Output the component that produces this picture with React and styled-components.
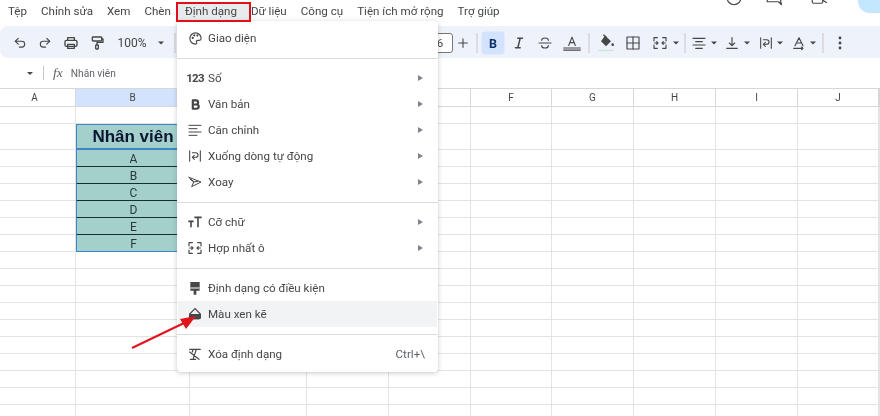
import React from "react";
import styled, { createGlobalStyle } from "styled-components";

const Global = createGlobalStyle`
  html, body { margin: 0; padding: 0; background: #fff; }
  body { font-family: Roboto, "Liberation Sans", sans-serif; overflow: hidden; }
`;

const Page = styled.div`
  position: relative;
  width: 880px;
  height: 416px;
  overflow: hidden;
  background: #fff;
  color: #444746;
  filter: blur(0.5px);
`;

const MenuBar = styled.div`
  height: 26px;
  display: flex;
  justify-content: space-between;
  padding-left: 8px;
`;
const MenuList = styled.div`
  display: flex;
  gap: 14px;
  align-items: center;
  height: 21px;
  font-size: 11.6px;
`;
const MenuLabel = styled.span`
  color: #444746;
`;
const TopIcons = styled.div`
  display: flex;
  align-items: flex-start;
  margin-top: -11px;
  margin-right: -18px;
  height: 24px;
`;
const TopIcon = styled.span`
  display: flex;
  margin-left: ${(p) => p.$gap}px;
`;
const Avatar = styled.div`
  width: 40px;
  height: 24px;
  margin-left: 30px;
  border-radius: 12px;
  background: #c2e7ff;
`;

const ToolBar = styled.div`
  height: 32px;
  background: #eef2fa;
  border-radius: 8px 0 0 8px;
  position: relative;
`;
const ToolSlot = styled.div`
  position: absolute;
  left: ${(p) => p.$x}px;
  top: calc(50% + 1px);
  transform: translate(-50%, -50%);
  display: flex;
  align-items: center;
  justify-content: center;
`;
const Active = styled.div`
  width: 23px;
  height: 23px;
  border-radius: 4px;
  background: #d3e3fd;
  display: flex;
  align-items: center;
  justify-content: center;
  font: 700 12.5px Roboto, sans-serif;
  color: #0b2f6b;
`;
const Zoom = styled.span`
  font-size: 12px;
  color: #444746;
`;
const Sep = styled.div`
  width: 1px;
  height: 20px;
  background: #c7c7c7;
`;
const Caret = styled.div`
  width: 0;
  height: 0;
  border-left: 3px solid transparent;
  border-right: 3px solid transparent;
  border-top: 3.5px solid #444746;
`;
const FontBox = styled.div`
  width: 24px;
  height: 18px;
  border: 1px solid #747775;
  border-radius: 3px;
  font-size: 11px;
  display: flex;
  align-items: center;
  justify-content: center;
  background: #fff;
`;

const FormulaBar = styled.div`
  height: 30px;
  display: flex;
  align-items: center;
  padding-left: 27px;
  font-size: 10.2px;
  color: #5f6368;
`;
const FxSep = styled.div`
  width: 1px;
  height: 14px;
  background: #c7c7c7;
  margin: 0 9px 0 10px;
`;
const FxMark = styled.i`
  font: italic 13.5px "Liberation Serif", serif;
  margin-right: 8px;
  color: #5f6368;
`;

const Row = styled.div`
  display: grid;
  grid-template-columns: 76px 114px 117px 82px 82px 81px 82px 82px 82px 81px 1fr;
  height: ${(p) => p.$h}px;
`;
const HeadCell = styled.div`
  border-top: 1px solid #d5d7da;
  border-bottom: 1px solid #d5d7da;
  border-right: 1px solid #d5d7da;
  background: ${(p) => (p.$active ? "#d3e3fd" : "#fff")};
  font-size: 10px;
  color: #444746;
  display: flex;
  align-items: center;
  justify-content: center;
  padding-right: ${(p) => (p.$pad ? "6px" : 0)};
`;
const Cell = styled.div`
  box-sizing: border-box;
  border-right: 1px solid #e3e3e3;
  border-bottom: 1px solid #e3e3e3;
`;
const TealCell = styled.div`
  box-sizing: border-box;
  background: #a3d0ca;
  border-left: 1px solid #3d85c6;
  border-bottom: 1px solid ${(p) => (p.$last ? "#3d85c6" : "#17302e")};
  padding-top: 1px;
  font-size: 12px;
  color: #2b3a38;
  display: flex;
  align-items: center;
  justify-content: center;
`;
const TitleCell = styled(TealCell)`
  border: 1px solid #3d85c6;
  border-bottom-width: 2px;
  padding-top: 0;
  font: 700 17px "Liberation Sans", Arial, sans-serif;
  color: #0b1533;
`;

const Menu = styled.div`
  position: absolute;
  left: 177px;
  top: 21px;
  width: 261px;
  height: 351px;
  background: #fff;
  border-radius: 4px;
  box-shadow: 0 1px 5px rgba(60, 64, 67, 0.28);
  font-size: 11.6px;
  color: #444746;
`;
const Section = styled.div`
  padding: ${(p) => (p.$first ? "4px 0 7px" : p.$last ? "6px 0" : "6px 0 7px")};
  border-top: ${(p) => (p.$first ? "none" : "1px solid #dadce0")};
`;
const Item = styled.div`
  height: 26px;
  display: flex;
  align-items: center;
  margin: 0 1px;
  padding: 0 12px 0 9px;
  background: ${(p) => (p.$hover ? "#f1f3f4" : "transparent")};
`;
const ItemIcon = styled.span`
  width: 16px;
  height: 16px;
  margin-right: 5px;
  display: flex;
  align-items: center;
  justify-content: center;
  color: #444746;
`;
const ItemText = styled.span`
  flex: 1;
  padding-bottom: 1px;
`;
const Shortcut = styled.span`
  color: #5f6368;
  padding-bottom: 1px;
`;
const SubArrow = styled.span`
  width: 0;
  height: 0;
  margin-right: 2px;
  border-top: 3px solid transparent;
  border-bottom: 3px solid transparent;
  border-left: 5px solid #80868b;
`;

const Highlight = styled.div`
  position: absolute;
  left: 176px;
  top: 2px;
  width: 75px;
  height: 20px;
  box-sizing: border-box;
  border: 2.5px solid #e0101a;
`;
const ActiveMenu = styled.div`
  position: absolute;
  left: 178px;
  top: 4px;
  width: 71px;
  height: 16px;
  background: #e8eaed;
  z-index: -1;
`;
const ArrowSvg = styled.svg`
  position: absolute;
  left: 128px;
  top: 308px;
`;

const S = ({ children, size = 16, sw = 2 }) => (
  <svg width={size} height={size} viewBox="0 0 24 24" fill="none" stroke="currentColor" strokeWidth={sw} strokeLinecap="round" strokeLinejoin="round">
    {children}
  </svg>
);

const icons = {
  undo: <S size={14} sw={1.9}><path d="M9 4 4 9l5 5" /><path d="M4 9h11a5 5 0 0 1 0 10h-4" /></S>,
  redo: <S size={14} sw={1.9}><path d="m15 4 5 5-5 5" /><path d="M20 9H9a5 5 0 0 0 0 10h4" /></S>,
  print: <S size={16}><path d="M7 8V4h10v4" /><rect x="3" y="8" width="18" height="9" rx="2" /><rect x="7" y="14" width="10" height="6" /></S>,
  paint: <S size={16}><rect x="5" y="3" width="14" height="6" rx="1" /><path d="M19 6h2v5h-9v3" /><rect x="10" y="15" width="4" height="6" rx="1" /></S>,
  palette: <S size={15} sw={1.8}><path d="M12 3a9 9 0 1 0 0 18c1.5 0 2-1 2-2 0-1.5-1-2-.5-3 .4-.8 1.5-1 2.5-1h2c2 0 3-1.5 3-3 0-5-4-9-9-9z" /><circle cx="7.5" cy="11" r=".8" fill="currentColor" /><circle cx="10" cy="7" r=".8" fill="currentColor" /><circle cx="15" cy="7" r=".8" fill="currentColor" /></S>,
  bold: <svg width="13" height="13" viewBox="0 0 24 24" fill="none" stroke="currentColor" strokeWidth="4" strokeLinejoin="round"><path d="M7 4.5h6a3.7 3.7 0 0 1 0 7.5H7zM7 12h7a3.9 3.9 0 0 1 0 7.8H7z" /></svg>,
  align: <S size={16} sw={1.5}><path d="M3 5h18M3 10h12M3 15h18M3 20h12" /></S>,
  wrap: <S size={16} sw={1.6}><path d="M4 4v16M20 4v16M8 7h5a3.5 3.5 0 0 1 0 7H9" /><path d="m11 11-3 3 3 3" /></S>,
  rotate: <S size={16} sw={1.5}><path d="M3 5l18 7-14 7 3-7z" /><path d="M10 12 5 8M10 12l6-1" /></S>,
  size: <svg width="16" height="16" viewBox="0 0 24 24" fill="none" stroke="currentColor" strokeWidth="2.4"><path d="M11 5h11M16.5 5v15M2 11h8M6 11v9" /></svg>,
  merge: <S size={16} sw={1.7}><path d="M3 9V4h5M21 9V4h-5M3 15v5h5M21 15v5h-5" /><path d="M4 12h5M7 10l2 2-2 2M20 12h-5M17 10l-2 2 2 2" /></S>,
  cond: <svg width="16" height="16" viewBox="0 0 24 24" fill="currentColor"><path d="M5 3h14v13H5zM10 16h4v6h-4z" /><path d="M5 12h14" stroke="#fff" strokeWidth="1.5" /></svg>,
  alt: <svg width="16" height="16" viewBox="0 0 24 24" fill="none" stroke="currentColor" strokeWidth="1.8"><path d="M12 4 4 12v5a2 2 0 0 0 2 2h12a2 2 0 0 0 2-2v-5z" /><path d="M4 13h16v4a2 2 0 0 1-2 2H6a2 2 0 0 1-2-2z" fill="currentColor" /></svg>,
  clear: <S size={16} sw={1.8}><path d="M4 5h16M9 5 8 9M14 5 9 20M5 20h8M4 9l14 11" /></S>,
  fill: <svg width="20" height="20" viewBox="0 0 24 24"><path d="M11 3l7 7-6 6-6-6z" fill="#444746" /><path d="M9 2l3 3" stroke="#444746" strokeWidth="1.6" /><circle cx="20" cy="14" r="1.6" fill="#444746" /><path d="M3 21h18" stroke="#cfe3d6" strokeWidth="1.6" /></svg>,
};

const Num123 = styled.span`
  font: 700 11.5px Roboto, sans-serif;
  letter-spacing: -0.8px;
`;

const columns = ["A", "B", "", "", "", "F", "G", "H", "I", "J", ""];
const blanks = Array.from({ length: 11 });

const tools = [
  [20, icons.undo],
  [45, icons.redo],
  [71, icons.print],
  [97, icons.paint],
  [132, <Zoom>100%</Zoom>],
  [161, <Caret />],
  [175, <Sep />],
  [440, <FontBox>6</FontBox>],
  [463, <S size={13}><path d="M12 4v16M4 12h16" /></S>],
  [477, <Sep />],
  [493, <Active>B</Active>],
  [519, <S size={14} sw={2.6}><path d="M10 4h8M6 20h8M14 4l-4 16" /></S>],
  [545, <S size={16} sw={1.7}><path d="M3 12h18M7 8a5 3.5 0 0 1 10 0M7 16a5 3.5 0 0 0 10 0" /></S>],
  [572, <S size={20} sw={1.3}><path d="M8 15l4-10 4 10M9.5 11.5h5M2 18h20M2 20.5h20" /></S>],
  [589, <Sep />],
  [606, icons.fill],
  [633, <S size={16} sw={1.7}><rect x="3" y="3" width="18" height="18" /><path d="M12 3v18M3 12h18" /></S>],
  [660, icons.merge],
  [676, <Caret />],
  [685, <Sep />],
  [699, <S size={16} sw={1.7}><path d="M3 5h18M7 10h10M3 15h18M7 20h10" /></S>],
  [714, <Caret />],
  [732, <S size={16} sw={1.7}><path d="M12 4v12M8 12l4 4 4-4M4 20h16" /></S>],
  [747, <Caret />],
  [766, icons.wrap],
  [780, <Caret />],
  [799, <S size={16} sw={1.7}><path d="M6 16 12 4l6 12M8 12h8M4 20h14l-2-2M18 20l-2 2" /></S>],
  [813, <Caret />],
  [823, <Sep />],
  [840, <svg width="4" height="14" viewBox="0 0 4 14" fill="#444746"><circle cx="2" cy="2" r="1.4" /><circle cx="2" cy="7" r="1.4" /><circle cx="2" cy="12" r="1.4" /></svg>],
];

export default function App() {
  const rowsBelow = Array.from({ length: 10 });
  return (
    <Page>
      <Global />
      <MenuBar>
        <MenuList>
          {["Tệp", "Chỉnh sửa", "Xem", "Chèn", "Định dạng", "Dữ liệu", "Công cụ", "Tiện ích mở rộng", "Trợ giúp"].map((m) => (
            <MenuLabel key={m}>{m}</MenuLabel>
          ))}
        </MenuList>
        <TopIcons>
          <TopIcon $gap={0}><S size={18} sw={1.6}><circle cx="12" cy="12" r="9" /><path d="M12 7v5l3 2" /></S></TopIcon>
          <TopIcon $gap={22}><S size={18} sw={1.6}><path d="M3 4h18v13l1 4-4-4H3z" /></S></TopIcon>
          <TopIcon $gap={27}><S size={18} sw={1.6}><rect x="3" y="5" width="14" height="14" rx="2" /><path d="m17 15 5 3" /></S></TopIcon>
          <Avatar />
        </TopIcons>
      </MenuBar>

      <ToolBar>
        {tools.map(([x, node]) => (
          <ToolSlot key={x} $x={x}>{node}</ToolSlot>
        ))}
      </ToolBar>

      <FormulaBar>
        <Caret />
        <FxSep />
        <FxMark>fx</FxMark>
        Nhân viên
      </FormulaBar>

      <Row $h={19}>
        {columns.map((c, i) => (
          <HeadCell key={i} $active={c === "B"} $pad={c === "A"}>{c}</HeadCell>
        ))}
      </Row>
      <Row $h={17}>{blanks.map((_, i) => <Cell key={i} />)}</Row>
      <Row $h={26}>
        <Cell />
        <TitleCell>Nhân viên</TitleCell>
        {blanks.slice(2).map((_, i) => <Cell key={i} />)}
      </Row>
      {["A", "B", "C", "D", "E", "F"].map((v, idx) => (
        <Row $h={17} key={v}>
          <Cell />
          <TealCell $last={idx === 5}>{v}</TealCell>
          {blanks.slice(2).map((_, i) => <Cell key={i} />)}
        </Row>
      ))}
      {rowsBelow.map((_, r) => (
        <Row $h={17} key={r}>{blanks.map((_, i) => <Cell key={i} />)}</Row>
      ))}

      <ActiveMenu />
      <Menu>
        <Section $first>
          <Item><ItemIcon>{icons.palette}</ItemIcon><ItemText>Giao diện</ItemText></Item>
        </Section>
        <Section>
          <Item><ItemIcon><Num123>123</Num123></ItemIcon><ItemText>Số</ItemText><SubArrow /></Item>
          <Item><ItemIcon>{icons.bold}</ItemIcon><ItemText>Văn bản</ItemText><SubArrow /></Item>
          <Item><ItemIcon>{icons.align}</ItemIcon><ItemText>Căn chỉnh</ItemText><SubArrow /></Item>
          <Item><ItemIcon>{icons.wrap}</ItemIcon><ItemText>Xuống dòng tự động</ItemText><SubArrow /></Item>
          <Item><ItemIcon>{icons.rotate}</ItemIcon><ItemText>Xoay</ItemText><SubArrow /></Item>
        </Section>
        <Section>
          <Item><ItemIcon>{icons.size}</ItemIcon><ItemText>Cỡ chữ</ItemText><SubArrow /></Item>
          <Item><ItemIcon>{icons.merge}</ItemIcon><ItemText>Hợp nhất ô</ItemText><SubArrow /></Item>
        </Section>
        <Section>
          <Item><ItemIcon>{icons.cond}</ItemIcon><ItemText>Định dạng có điều kiện</ItemText></Item>
          <Item $hover><ItemIcon>{icons.alt}</ItemIcon><ItemText>Màu xen kẽ</ItemText></Item>
        </Section>
        <Section $last>
          <Item><ItemIcon>{icons.clear}</ItemIcon><ItemText>Xóa định dạng</ItemText><Shortcut>Ctrl+\</Shortcut></Item>
        </Section>
      </Menu>
      <Highlight />
      <ArrowSvg width="76" height="46" viewBox="0 0 76 46">
        <path d="M4 40 L56 15" stroke="#e0141c" strokeWidth="2" fill="none" />
        <path d="M68 8 L52 11 L58 21 Z" fill="#e0141c" />
      </ArrowSvg>
    </Page>
  );
}
